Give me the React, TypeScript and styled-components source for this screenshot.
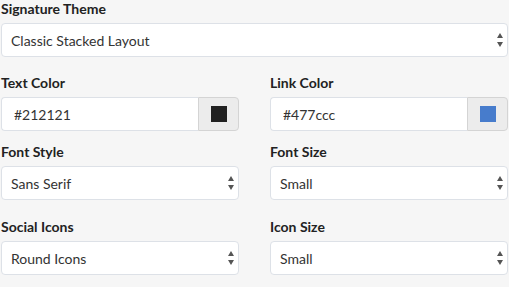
import React from "react";
import styled, { createGlobalStyle } from "styled-components";

const GlobalStyle = createGlobalStyle`
  html, body {
    margin: 0;
    padding: 0;
    background: #f6f6f6;
    font-family: Lato, "Open Sans", sans-serif;
    color: #333;
  }
`;

const Form = styled.form`
  width: 507px;
  margin-left: 1px;
  display: grid;
  grid-template-columns: 238px 238px;
  column-gap: 31px;
`;

const Group = styled.div<{ $full?: boolean; $mb?: number }>`
  grid-column: ${(p) => (p.$full ? "1 / -1" : "auto")};
  display: flex;
  flex-direction: column;
  margin-bottom: ${(p) => (p.$mb ?? 17)}px;
`;

const Label = styled.label`
  font-size: 14px;
  font-weight: 700;
  line-height: 18px;
  color: #222;
  margin-bottom: 5px;
`;

const SelectWrap = styled.div`
  position: relative;
  height: 34px;
`;

const Select = styled.select`
  appearance: none;
  -webkit-appearance: none;
  width: 100%;
  height: 34px;
  box-sizing: border-box;
  border: 1px solid #dde1e7;
  border-radius: 4px;
  background: #fff;
  padding: 0 24px 0 9px;
  font-family: Lato, "Open Sans", sans-serif;
  font-size: 14px;
  color: #333;
  outline: none;
`;

const Arrows = styled.svg`
  position: absolute;
  right: 5px;
  top: 10px;
  width: 6px;
  height: 14px;
  pointer-events: none;
`;

const ColorRow = styled.div`
  display: flex;
  height: 34px;
`;

const ColorInput = styled.input`
  flex: 1;
  min-width: 0;
  box-sizing: border-box;
  height: 34px;
  border: 1px solid #dde1e7;
  border-right: none;
  border-radius: 4px 0 0 4px;
  background: #fff;
  padding: 0 12px;
  font-family: Lato, "Open Sans", sans-serif;
  font-size: 14px;
  color: #333;
  outline: none;
`;

const SwatchButton = styled.div`
  width: 41px;
  box-sizing: border-box;
  border: 1px solid #d4d4d4;
  border-radius: 0 4px 4px 0;
  background: #ececec;
  display: flex;
  align-items: center;
  justify-content: center;
`;

const Swatch = styled.span<{ $color: string }>`
  width: 16px;
  height: 16px;
  background: ${(p) => p.$color};
`;

const SelectField: React.FC<{ value: string }> = ({ value }) => (
  <SelectWrap>
    <Select defaultValue={value}>
      <option>{value}</option>
    </Select>
    <Arrows viewBox="0 0 6 14">
      <path d="M3 0 L6 5 L0 5 Z" fill="#555" />
      <path d="M0 9 L6 9 L3 14 Z" fill="#555" />
    </Arrows>
  </SelectWrap>
);

const ColorField: React.FC<{ value: string }> = ({ value }) => (
  <ColorRow>
    <ColorInput defaultValue={value} />
    <SwatchButton>
      <Swatch $color={value} />
    </SwatchButton>
  </ColorRow>
);

const App: React.FC = () => {
  return (
    <>
      <GlobalStyle />
      <Form>
        <Group $full>
          <Label>Signature Theme</Label>
          <SelectField value="Classic Stacked Layout" />
        </Group>

        <Group $mb={12}>
          <Label>Text Color</Label>
          <ColorField value="#212121" />
        </Group>
        <Group $mb={12}>
          <Label>Link Color</Label>
          <ColorField value="#477ccc" />
        </Group>

        <Group $mb={18}>
          <Label>Font Style</Label>
          <SelectField value="Sans Serif" />
        </Group>
        <Group $mb={18}>
          <Label>Font Size</Label>
          <SelectField value="Small" />
        </Group>

        <Group>
          <Label>Social Icons</Label>
          <SelectField value="Round Icons" />
        </Group>
        <Group>
          <Label>Icon Size</Label>
          <SelectField value="Small" />
        </Group>
      </Form>
    </>
  );
};

export default App;
